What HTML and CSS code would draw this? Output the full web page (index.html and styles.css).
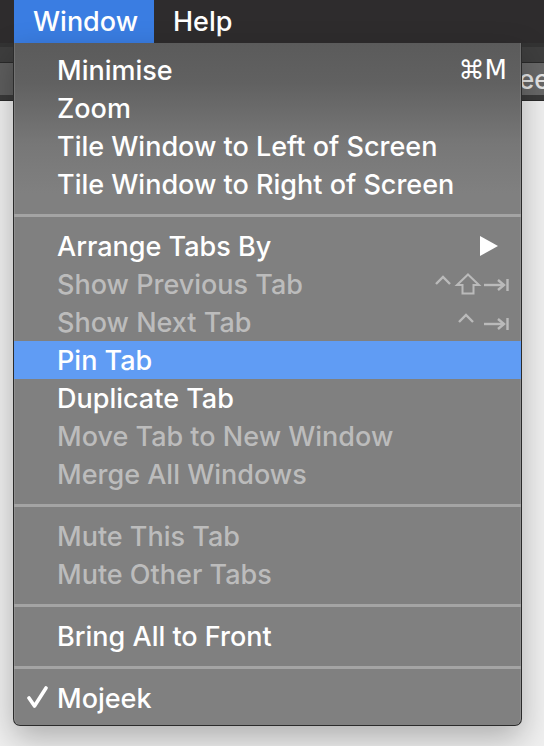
FILE: index.html
```html
<!doctype html>
<html>
  <head>
    <title>Window menu</title>
    <link rel="stylesheet" href="styles.css">
  </head>
  <body>
    <div class="desktop">
      <div class="menubar">
        <span class="menubar-item active">Window</span>
        <span class="menubar-item">Help</span>
      </div>

      <div class="browser">
        <div class="toolbar"></div>
        <div class="tabstrip"><div class="tab">Mojeek</div></div>
        <div class="toolbar-bottom"></div>
        <div class="page"></div>
      </div>

      <div class="menu">
        <div class="item"><span>Minimise</span><span class="key">&#8984;M</span></div>
        <div class="item"><span>Zoom</span></div>
        <div class="item"><span>Tile Window to Left of Screen</span></div>
        <div class="item"><span>Tile Window to Right of Screen</span></div>
        <div class="sep"></div>
        <div class="item submenu"><span>Arrange Tabs By</span>
          <svg class="arrow" width="18" height="20" viewBox="0 0 18 20"><polygon points="0,0 18,10 0,20" fill="#fff"/></svg>
        </div>
        <div class="item disabled"><span>Show Previous Tab</span>
          <svg class="keys" width="74" height="22" viewBox="0 0 74 22" fill="none" stroke="#bababa" stroke-width="2.4">
            <polyline points="1,11 8,4 15,11"/>
            <path d="M33 1.5 L44 12 L38.5 12 L38.5 20.5 L27.5 20.5 L27.5 12 L22 12 Z" stroke-width="2" stroke-linejoin="miter"/>
            <line x1="49" y1="12" x2="69" y2="12"/>
            <polyline points="63,7 69,12 63,17"/>
            <line x1="72.5" y1="6" x2="72.5" y2="18"/>
          </svg>
        </div>
        <div class="item disabled"><span>Show Next Tab</span>
          <svg class="keys" width="51" height="20" viewBox="0 0 51 20" fill="none" stroke="#bababa" stroke-width="2.4">
            <polyline points="1,10 8,3 15,10"/>
            <line x1="26" y1="12" x2="46" y2="12"/>
            <polyline points="40,7 46,12 40,17"/>
            <line x1="49.5" y1="6" x2="49.5" y2="18"/>
          </svg>
        </div>
        <div class="item selected"><span>Pin Tab</span></div>
        <div class="item"><span>Duplicate Tab</span></div>
        <div class="item disabled"><span>Move Tab to New Window</span></div>
        <div class="item disabled"><span>Merge All Windows</span></div>
        <div class="sep"></div>
        <div class="item disabled"><span>Mute This Tab</span></div>
        <div class="item disabled"><span>Mute Other Tabs</span></div>
        <div class="sep"></div>
        <div class="item"><span>Bring All to Front</span></div>
        <div class="sep"></div>
        <div class="item checked">
          <svg class="check" width="31" height="24" viewBox="0 0 31 24" fill="none" stroke="#fff" stroke-width="3.6" stroke-linecap="round" stroke-linejoin="round">
            <polyline points="3,12 8.5,20 20,2"/>
          </svg>
          <span>Mojeek</span>
        </div>
      </div>
    </div>
  </body>
</html>
```

FILE: styles.css
```css
* { margin: 0; padding: 0; box-sizing: border-box; }
body { font-family: Inter, "Noto Sans", "Liberation Sans", sans-serif; background: #efefef; }

.desktop { position: relative; width: 544px; height: 746px; overflow: hidden; }

.menubar { height: 43px; background: #2e2c2d; display: flex; padding-left: 14px; }
.menubar-item { color: #fff; font-size: 27px; font-weight: 500; line-height: 44px; padding: 0 19px; white-space: nowrap; }
.menubar-item.active { background: #3a7de2; width: 140px; }

.browser { display: flex; flex-direction: column; height: 703px; }
.toolbar { height: 19px; background: #3e3e3e; border-top: 4px solid #333; }
.tabstrip { height: 33px; background: #5e5e5e; border-top: 1px solid #2a2a2a; display: flex; justify-content: flex-end; }
.tab { width: 104px; margin-right: -29px; background: #686868; color: #e6e6e6; font-size: 26px; font-weight: 500; line-height: 33px; padding-left: 4px; white-space: nowrap; }
.toolbar-bottom { height: 6px; background: #3a3a3a; border-bottom: 1px solid #2a2a2a; }
.page { flex: 1; background: #f0f0f0; }

.menu {
  position: absolute; left: 13px; top: 43px; width: 509px; height: 683px;
  padding-top: 8px;
  background: linear-gradient(to bottom, #5b5b5b 0, #616161 40px, #777 100px, #808080 150px, #808080 100%);
  border: 1px solid #2b2b2b; border-top: 0;
  border-radius: 0 0 7px 7px;
  box-shadow: inset 1px 0 0 rgba(255,255,255,0.12), inset -1px 0 0 rgba(255,255,255,0.12), 0 12px 32px rgba(0,0,0,0.28);
  color: #fff; font-size: 27px; font-weight: 500;
}
.item { height: 38px; display: flex; align-items: center; justify-content: space-between; padding: 0 14px 0 43px; white-space: nowrap; }
.item.disabled { color: #bcbcbc; }
.item.selected { background: #609cf4; }
.item.submenu { padding-right: 23px; }
.item.checked { justify-content: flex-start; padding-left: 12px; }
.key { font-family: "DejaVu Sans", sans-serif; font-size: 26px; font-weight: normal; }
.keys { margin-right: -2px; }
.sep { height: 24px; display: flex; align-items: center; }
.sep::before { content: ""; display: block; width: 100%; height: 3px; background: #a4a4a4; }
```
